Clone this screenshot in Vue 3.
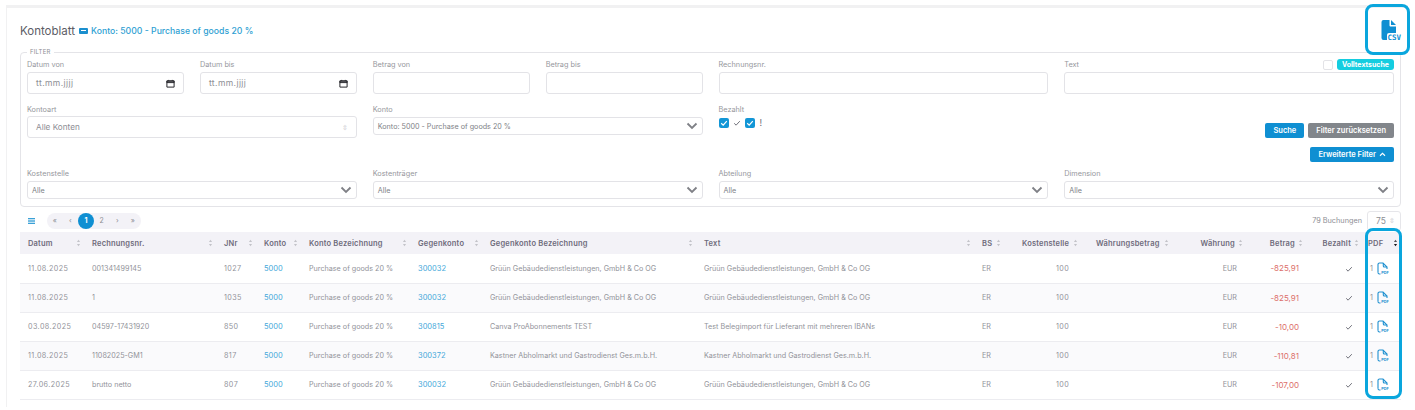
<template>
  <div class="page">
    <div class="card">
      <div class="head">
        <h1>Kontoblatt</h1>
        <span class="badge-icon"><i></i></span>
        <span class="head-info">Konto: 5000 - Purchase of goods 20 %</span>
      </div>

      <fieldset class="filter">
        <legend>FILTER</legend>
        <div class="grid">
          <div class="field">
            <label>Datum von</label>
            <div class="input date">tt.mm.jjjj <CalendarIcon /></div>
          </div>
          <div class="field">
            <label>Datum bis</label>
            <div class="input date">tt.mm.jjjj <CalendarIcon /></div>
          </div>
          <div class="field">
            <label>Betrag von</label>
            <div class="input"></div>
          </div>
          <div class="field">
            <label>Betrag bis</label>
            <div class="input"></div>
          </div>
          <div class="field wide">
            <label>Rechnungsnr.</label>
            <div class="input"></div>
          </div>
          <div class="field wide">
            <label>Text</label>
            <div class="fulltext">
              <span class="box"></span>
              <span class="pill">Volltextsuche</span>
            </div>
            <div class="input"></div>
          </div>

          <div class="field wide">
            <label>Kontoart</label>
            <div class="input plain">Alle Konten <span class="updown">⇳</span></div>
          </div>
          <div class="field wide">
            <label>Konto</label>
            <div class="select">Konto: 5000 - Purchase of goods 20 % <Chevron /></div>
          </div>
          <div class="field wide">
            <label>Bezahlt</label>
            <div class="paid">
              <span class="check"><svg viewBox="0 0 10 10"><path d="M2.200 5.300l2 1.900 3.600-4" /></svg></span>
              <svg class="tick" viewBox="0 0 10 10"><path d="M1.500 5.400l2.400 2.300 4.600-5" /></svg>
              <span class="check"><svg viewBox="0 0 10 10"><path d="M2.200 5.300l2 1.900 3.600-4" /></svg></span>
              <span class="bang">!</span>
            </div>
          </div>
          <div class="field wide actions">
            <div class="btn-row">
              <button class="btn">Suche</button>
              <button class="btn grey">Filter zurücksetzen</button>
            </div>
            <div class="btn-row">
              <button class="btn">
                Erweiterte Filter
                <svg class="up-chev" viewBox="0 0 8 6"><path d="M1 4.500l3-3 3 3" /></svg>
              </button>
            </div>
          </div>

          <div v-for="name in extraFilters" :key="name" class="field wide">
            <label>{{ name }}</label>
            <div class="select">Alle <Chevron /></div>
          </div>
        </div>
      </fieldset>

      <div class="toolbar">
        <svg class="list-icon" viewBox="0 0 7 6"><path d="M0 .5h7M0 2.200h7M0 3.800h7M0 5.500h7" /></svg>
        <div class="pager">
          <span>«</span>
          <span>‹</span>
          <span class="current">1</span>
          <span>2</span>
          <span>›</span>
          <span>»</span>
        </div>
        <div class="count">
          79 Buchungen
          <div class="per-page">75 <span class="updown">⇳</span></div>
        </div>
      </div>

      <table>
        <colgroup>
          <col v-for="c in columns" :key="c.label" :style="{ width: c.width + 'px' }" />
        </colgroup>
        <thead>
          <tr>
            <th v-for="c in columns" :key="c.label" :class="{ 'pdf-head': c.label === 'PDF' }">
              <div class="th" :class="{ end: c.right, tight: c.tight }">
                <span>{{ c.label }}</span>
                <svg class="sort" :class="{ active: c.label === 'PDF' }" viewBox="0 0 6 10"><path class="up" d="M3 .8l2 3H1z" /><path class="down" d="M3 9.200l2-3H1z" /></svg>
              </div>
            </th>
          </tr>
        </thead>
        <tbody>
          <tr v-for="r in rows" :key="r.jnr">
            <td class="digits">{{ r.date }}</td>
            <td>{{ r.invoice }}</td>
            <td class="digits">{{ r.jnr }}</td>
            <td class="link">5000</td>
            <td>Purchase of goods 20 %</td>
            <td class="link">{{ r.counter }}</td>
            <td>{{ r.name }}</td>
            <td>{{ r.text }}</td>
            <td>ER</td>
            <td class="num-c digits">100</td>
            <td></td>
            <td class="right pad-w">EUR</td>
            <td class="right amount">{{ r.amount }}</td>
            <td class="right pad-b">
              <svg class="tick small" viewBox="0 0 10 10"><path d="M1.500 5.400l2.400 2.300 4.600-5" /></svg>
            </td>
            <td class="pdf">
              <span>1</span>
              <svg viewBox="0 0 12 13">
                <path d="M1 10.500V2.500A1.500 1.500 0 0 1 2.500 1H6L10 5V7" />
                <path d="M6.300 1V4A1 1 0 0 0 7.300 5H10M1 10.500A1.500 1.500 0 0 0 2.500 12H3.500" />
                <text x="4.300" y="12.300">PDF</text>
              </svg>
            </td>
          </tr>
        </tbody>
      </table>
    </div>

    <!-- highlight frames that lie over the page -->
    <div class="frame csv-frame">
      <svg viewBox="0 0 22 21">
        <path class="csv-doc" d="M2.500 0H8.500V5.500a1 1 0 0 0 1 1H15V13H8a2 2 0 0 0-2 2V20H2.500A2 2 0 0 1 .5 18V2A2 2 0 0 1 2.500 0z" />
        <path class="csv-doc" d="M10 0l5 5h-5z" />
        <text x="6.500" y="19.500">CSV</text>
      </svg>
    </div>
    <div class="frame pdf-frame"></div>
  </div>
</template>

<script setup>
import { h } from 'vue'

const CalendarIcon = () =>
  h('svg', { class: 'cal', viewBox: '0 0 10 10' }, [
    h('path', { d: 'M1 2h8v7H1zM1 2.500h8V4H1zM3 1v1M7 1v1' })
  ])

const Chevron = () =>
  h('svg', { class: 'chev', viewBox: '0 0 12 8' }, [h('path', { d: 'M1.500 1.500L6 6l4.500-4.500' })])

const extraFilters = ['Kostenstelle', 'Kostenträger', 'Abteilung', 'Dimension']

const columns = [
  { label: 'Datum', width: 64 },
  { label: 'Rechnungsnr.', width: 132 },
  { label: 'JNr', width: 40 },
  { label: 'Konto', width: 45 },
  { label: 'Konto Bezeichnung', width: 109 },
  { label: 'Gegenkonto', width: 72 },
  { label: 'Gegenkonto Bezeichnung', width: 214 },
  { label: 'Text', width: 278 },
  { label: 'BS', width: 40, tight: true },
  { label: 'Kostenstelle', width: 74, tight: true },
  { label: 'Währungsbetrag', width: 102, tight: true },
  { label: 'Währung', width: 56, right: true },
  { label: 'Betrag', width: 60, right: true },
  { label: 'Bezahlt', width: 56, right: true },
  { label: 'PDF', width: 39 }
]

const gruen = 'Grüün Gebäudedienstleistungen, GmbH & Co OG'
const kastner = 'Kastner Abholmarkt und Gastrodienst Ges.m.b.H.'

const rows = [
  { date: '11.08.2025', invoice: '001341499145', jnr: 1027, counter: 300032, name: gruen, text: gruen, amount: '-825,91' },
  { date: '11.08.2025', invoice: '1', jnr: 1035, counter: 300032, name: gruen, text: gruen, amount: '-825,91' },
  { date: '03.08.2025', invoice: '04597-17431920', jnr: 850, counter: 300815, name: 'Canva ProAbonnements TEST', text: 'Test Belegimport für Lieferant mit mehreren IBANs', amount: '-10,00' },
  { date: '11.08.2025', invoice: '11082025-GM1', jnr: 817, counter: 300372, name: kastner, text: kastner, amount: '-110,81' },
  { date: '27.06.2025', invoice: 'brutto netto', jnr: 807, counter: 300032, name: gruen, text: gruen, amount: '-107,00' }
]
</script>

<style>
body {
  background: #fff;
  overflow: hidden;
}
</style>

<style scoped>
.page {
  position: relative;
  height: 410px;
  overflow: hidden;
  font-family: Inter, "Open Sans", sans-serif;
  font-size: 8px;
  color: #8d8e94;
}

.card {
  margin: 5px 7px 0 6px;
  padding: 0 0 0 13px;
  border-top: 3px solid #f1f1f2;
  border-left: 1px solid #f1f1f2;
  height: 402px;
  box-sizing: border-box;
}

.head {
  display: flex;
  align-items: center;
  height: 41px;
  box-sizing: border-box;
  padding-top: 4px;
}

h1 {
  margin: 0 4px 0 0;
  font-size: 11.500px;
  font-weight: 400;
  color: #5c5c66;
}

.badge-icon {
  display: flex;
  align-items: center;
  justify-content: center;
  width: 9px;
  height: 6px;
  margin-right: 3px;
  background: #1b8fce;
  border-radius: 1px;
}

.badge-icon i {
  width: 5px;
  height: 1px;
  background: #fff;
}

.head-info {
  font-size: 8.700px;
  font-weight: 500;
  color: #2f9fd3;
}

.filter {
  margin: 0 7px 0 0;
  padding: 0 6px 6px 6px;
  height: 158px;
  box-sizing: border-box;
  border: 1px solid #e4e4e8;
  border-radius: 4px;
  min-width: 0;
}

legend {
  margin-left: 0;
  padding: 0 3px;
  font-size: 6px;
  line-height: 6px;
  letter-spacing: 0.2px;
  color: #8d8e94;
}

.grid {
  display: grid;
  grid-template-columns: repeat(8, 1fr);
  grid-template-rows: 40px 59px 40px;
  column-gap: 16px;
  row-gap: 5px;
  padding-top: 4px;
}

.field {
  position: relative;
  min-width: 0;
}

.wide {
  grid-column: span 2;
}

label {
  display: block;
  height: 13px;
  line-height: 12px;
  font-size: 7.300px;
  color: #96979d;
}

.input {
  display: flex;
  align-items: center;
  justify-content: space-between;
  height: 22px;
  box-sizing: border-box;
  padding: 0 8px;
  border: 1px solid #e3e3e7;
  border-radius: 3px;
  font-size: 8.500px;
  color: #8d8e94;
}

.date {
  letter-spacing: 0.4px;
}

.plain {
  margin-top: -1px;
  font-size: 8.200px;
}

.cal {
  width: 9px;
  height: 9px;
  fill: none;
  stroke: #26262c;
  stroke-width: 1.100;
}

.updown {
  font-size: 7px;
  color: #c5c5ca;
}

.select {
  display: flex;
  align-items: center;
  justify-content: space-between;
  height: 18px;
  box-sizing: border-box;
  padding: 0 4px;
  border: 1px solid #e3e3e7;
  border-radius: 3px;
  font-size: 7.200px;
  color: #7e7f86;
}

.chev {
  width: 12px;
  height: 8px;
  fill: none;
  stroke: #7f8086;
  stroke-width: 1.800;
}

.fulltext {
  position: absolute;
  top: 0;
  right: 0;
  display: flex;
  align-items: center;
  gap: 4px;
}

.box {
  width: 10px;
  height: 10px;
  box-sizing: border-box;
  border: 1px solid #e3e3e7;
  border-radius: 2px;
}

.pill {
  padding: 0 5px;
  height: 11px;
  line-height: 11px;
  background: #14cde0;
  border-radius: 3px;
  color: #fff;
  font-size: 7px;
  font-weight: 700;
}

.paid {
  display: flex;
  align-items: center;
  gap: 4px;
}

.check {
  width: 10px;
  height: 10px;
  background: #1396d6;
  border-radius: 2px;
}

.check svg {
  display: block;
  width: 10px;
  height: 10px;
  fill: none;
  stroke: #fff;
  stroke-width: 1.200;
}

.tick {
  width: 8px;
  height: 8px;
  fill: none;
  stroke: #6b6c75;
  stroke-width: 1.200;
}

.bang {
  margin-left: 1px;
  font-size: 9px;
  color: #6b6c75;
}

.actions {
  display: flex;
  flex-direction: column;
  align-items: flex-end;
  gap: 9px;
  padding-top: 19px;
}

.btn-row {
  display: flex;
  gap: 4px;
}

.btn {
  display: flex;
  align-items: center;
  gap: 3px;
  height: 15px;
  padding: 0 8px;
  border: 0;
  border-radius: 2px;
  background: #0f8fd2;
  color: #fff;
  font-family: inherit;
  font-size: 7.500px;
  font-weight: 600;
}

.grey {
  background: #82868b;
}

.up-chev {
  width: 7px;
  height: 5px;
  fill: none;
  stroke: #fff;
  stroke-width: 1.300;
}

.toolbar {
  display: flex;
  align-items: center;
  height: 25px;
  padding: 2px 7px 0 0;
  box-sizing: border-box;
}

.list-icon {
  width: 7px;
  height: 6px;
  margin: 0 12px 0 8px;
  stroke: #2596d3;
  stroke-width: 0.900;
}

.pager {
  display: flex;
  align-items: center;
  height: 16px;
  border-radius: 8px;
  background: #f3f2f7;
}

.pager span {
  width: 15.500px;
  text-align: center;
  font-size: 7px;
}

.pager .current {
  width: 16px;
  height: 16px;
  line-height: 16px;
  border-radius: 50%;
  background: #0f8fd2;
  color: #fff;
  font-weight: 700;
}

.count {
  display: flex;
  align-items: center;
  gap: 5px;
  margin-left: auto;
  font-size: 7.300px;
}

.per-page {
  display: flex;
  align-items: center;
  justify-content: space-between;
  width: 34px;
  height: 20px;
  box-sizing: border-box;
  padding: 0 5px 0 8px;
  border: 1px solid #e6e6ea;
  border-radius: 3px;
  font-size: 8.500px;
}

table {
  width: 1381px;
  table-layout: fixed;
  border-collapse: collapse;
}

th {
  height: 22px;
  padding: 0 3px 0 8px;
  background: #f3f2f7;
  font-size: 7.500px;
  font-weight: 600;
  letter-spacing: 0.2px;
  color: #6e6b7b;
  text-align: left;
}

th.pdf-head {
  padding-left: 6px;
}

.th {
  display: flex;
  align-items: center;
  justify-content: space-between;
}

.th.end {
  justify-content: flex-end;
  gap: 3px;
}

.th.tight {
  justify-content: flex-start;
  gap: 4px;
}

.sort {
  flex: none;
  width: 5px;
  height: 8px;
  fill: #c3c3c9;
}

.sort.active .up {
  fill: #55555c;
}

.sort.active .down {
  fill: #17171c;
}

td {
  height: 29px;
  box-sizing: border-box;
  padding: 0 0 0 8px;
  border-bottom: 1px solid #ececf0;
  font-size: 7.200px;
  color: #92939a;
  white-space: nowrap;
  overflow: hidden;
}

tbody tr:nth-child(even) td {
  background: #fafafc;
}

.digits {
  letter-spacing: 0.4px;
}

td.link {
  color: #45a8da;
  font-size: 7.500px;
}

.num-c {
  padding-left: 42px;
}

.right {
  padding: 0;
  text-align: right;
}

.pad-w {
  padding-right: 9px;
}

td.amount {
  padding-right: 7px;
  color: #dc6f6b;
  font-size: 8px;
}

.pad-b {
  padding-right: 9px;
}

.tick.small {
  display: inline-block;
  vertical-align: middle;
  width: 8px;
  height: 8px;
}

.pdf {
  padding-left: 8px;
}

.pdf span {
  vertical-align: middle;
  margin-right: 4px;
}

.pdf svg {
  vertical-align: middle;
  width: 12px;
  height: 13px;
  fill: none;
  stroke: #1e90d0;
  stroke-width: 1.100;
}

.pdf text {
  fill: #1e90d0;
  stroke: none;
  font-size: 3.800px;
  font-weight: 700;
}

.frame {
  position: absolute;
  box-sizing: border-box;
  border: 3px solid #0aa6dd;
  border-radius: 8px;
}

.csv-frame {
  left: 1365px;
  top: 4px;
  width: 45px;
  height: 51px;
}

.csv-frame svg {
  position: absolute;
  left: 13px;
  top: 13px;
  width: 22px;
  height: 21px;
}

.csv-doc {
  fill: #0f8fd2;
}

.csv-frame text {
  fill: #0f8fd2;
  font-family: "DejaVu Sans Mono", monospace;
  font-size: 7.500px;
  font-weight: 700;
}

.pdf-frame {
  left: 1365px;
  top: 228px;
  width: 37px;
  height: 171px;
}
</style>
